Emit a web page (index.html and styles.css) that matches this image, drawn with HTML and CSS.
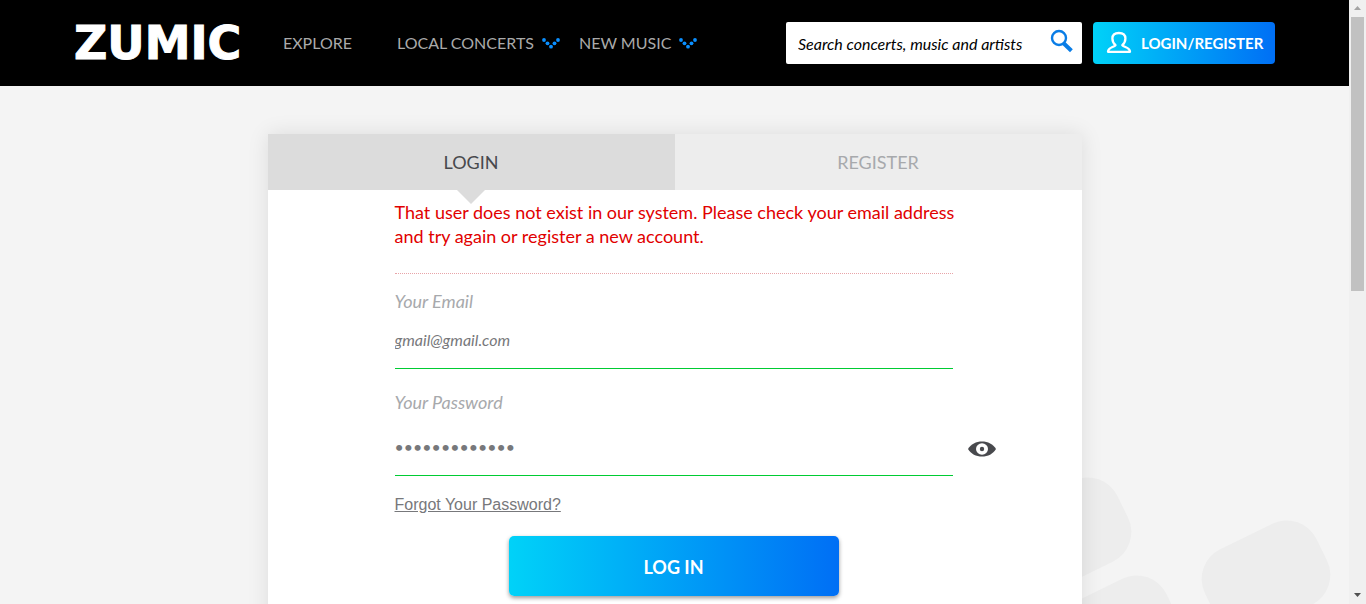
FILE: index.html
```html
<!DOCTYPE html>
<html lang="en">
<head>
<meta charset="utf-8">
<title>Zumic - Login</title>
<link rel="stylesheet" href="styles.css">
</head>
<body>
<div class="shell">
  <div class="page">
    <header class="header">
      <a class="logo" href="#">ZUMIC</a>
      <nav class="nav">
        <a class="nav-link nav-explore" href="#">EXPLORE</a>
        <a class="nav-link" href="#">LOCAL CONCERTS
          <svg class="dots" viewBox="0 0 18 11" aria-hidden="true"><circle cx="2" cy="2" r="1.9"/><circle cx="5.5" cy="5.3" r="1.9"/><circle cx="9" cy="8.7" r="1.9"/><circle cx="12.5" cy="5.3" r="1.9"/><circle cx="16" cy="2" r="1.9"/></svg>
        </a>
        <a class="nav-link" href="#">NEW MUSIC
          <svg class="dots" viewBox="0 0 18 11" aria-hidden="true"><circle cx="2" cy="2" r="1.9"/><circle cx="5.5" cy="5.3" r="1.9"/><circle cx="9" cy="8.7" r="1.9"/><circle cx="12.5" cy="5.3" r="1.9"/><circle cx="16" cy="2" r="1.9"/></svg>
        </a>
      </nav>
      <form class="search">
        <input class="search-input" type="text" aria-label="Search" placeholder="Search concerts, music and artists">
        <button class="search-button" type="button" aria-label="Search">
          <svg class="search-icon" viewBox="0 0 24 24" aria-hidden="true"><circle cx="9" cy="9" r="7" fill="none" stroke="#0a7de6" stroke-width="2.4"/><path d="M13.6 14.2L21.4 21.8" stroke="#0a7de6" stroke-width="4"/></svg>
        </button>
      </form>
      <a class="account" href="#">
        <svg class="user-icon" viewBox="0 0 26 24" aria-hidden="true"><path d="M9.5 14.2C7.4 12.4 6.4 10 6.4 7.6C6.4 4 9 2 12.9 2S19.4 4 19.4 7.6C19.4 10 18.4 12.4 16.3 14.2C18.2 16.4 23.9 16.5 24 20.8H2C2.1 16.5 7.6 16.4 9.5 14.2Z" fill="none" stroke="#fff" stroke-width="2.3" stroke-linejoin="round"/></svg>
        LOGIN/REGISTER
      </a>
    </header>
    <main class="main">
      <svg class="pattern" viewBox="1049 464 300 140" aria-hidden="true">
        <rect x="1005" y="489" width="124" height="90" rx="33" transform="rotate(-26 1067 534)"/>
        <rect x="1054" y="587" width="124" height="90" rx="33" transform="rotate(-26 1116 632)"/>
        <rect x="1204" y="532" width="124" height="90" rx="33" transform="rotate(-26 1266 577)"/>
      </svg>
      <section class="card">
        <div class="tabs">
          <button class="tab tab-active" type="button">LOGIN</button>
          <button class="tab" type="button">REGISTER</button>
        </div>
        <form class="form">
          <p class="error">That user does not exist in our system. Please check your email address<br>and try again or register a new account.</p>
          <label class="label" for="email">Your Email</label>
          <input class="field" id="email" type="email" value="gmail@gmail.com">
          <label class="label label-password" for="password">Your Password</label>
          <div class="password-row">
            <input class="field field-password" id="password" type="password" value="password12345">
            <button class="reveal" type="button" aria-label="Show password">
              <svg class="eye" viewBox="0 0 28 16" aria-hidden="true"><path d="M0 8C3 3 8 .5 14 .5S25 3 28 8C25 13 20 15.500 14 15.500S3 13 0 8Z" fill="#48494d"/><ellipse cx="14" cy="8" rx="6" ry="5.700" fill="#fff"/><circle cx="14" cy="8" r="2.200" fill="#48494d"/></svg>
            </button>
          </div>
          <a class="forgot" href="#">Forgot Your Password?</a>
          <button class="submit" type="button">LOG IN</button>
        </form>
      </section>
    </main>
  </div>
  <div class="scrollbar" aria-hidden="true">
    <svg class="arrow" viewBox="0 0 17 17"><path d="M5 10h7L8.500 6z" fill="#a3a3a3"/></svg>
    <div class="thumb"></div>
    <svg class="arrow" viewBox="0 0 17 17"><path d="M5 6h7L8.500 10z" fill="#505050"/></svg>
  </div>
</div>
</body>
</html>
```
FILE: styles.css
```css
* { box-sizing: border-box; }
body { margin: 0; font-family: Lato, sans-serif; background: #f4f4f4; }
input, button { font-family: inherit; border: 0; background: none; padding: 0; outline: 0; }
button { cursor: pointer; }

.shell { display: flex; height: 100vh; overflow: hidden; }
.page { flex: 1; display: flex; flex-direction: column; }

.header { flex: none; display: flex; align-items: center; height: 86px; padding: 0 74px; background: #000; }
.logo { width: 209px; font: bold 46px/46px "DejaVu Sans", sans-serif; -webkit-text-stroke: 1px #fff; color: #fff; text-decoration: none; }
.nav { display: flex; flex: 1; gap: 19px; }
.nav-link { display: flex; align-items: center; gap: 8px; font-size: 16px; line-height: 24px; color: #aaa; text-decoration: none; white-space: nowrap; }
.nav-explore { margin-right: 26px; }
.dots { width: 18px; height: 11px; fill: #0a8fff; }
.search { display: flex; align-items: center; width: 296px; height: 42px; margin-right: 11px; padding: 0 8px 0 12px; background: #fff; border-radius: 2px; }
.search-input { flex: 1; min-width: 0; height: 42px; padding-top: 1px; font-size: 16px; font-style: italic; color: #000; }
.search-input::placeholder { color: #000; opacity: 1; }
.search-button { display: flex; padding-bottom: 4px; }
.search-icon { width: 24px; height: 24px; }
.account { display: flex; align-items: center; gap: 9px; width: 182px; height: 42px; padding-left: 13px; border-radius: 4px; background: linear-gradient(90deg, #00d2f8, #006ff5); color: #fff; font-size: 15px; font-weight: bold; text-decoration: none; white-space: nowrap; }
.user-icon { width: 26px; height: 24px; }

.main { position: relative; flex: 1; min-height: 0; padding-top: 48px; overflow: hidden; }
.pattern { position: absolute; right: 0; bottom: 0; width: 300px; height: 140px; fill: #ededed; }
.card { position: relative; max-width: 814px; margin: 0 auto; background: #fff; box-shadow: 0 0 20px rgba(0, 0, 0, 0.1); }
.tabs { display: grid; grid-template-columns: 1fr 1fr; background: #ededed; }
.tab { position: relative; height: 56px; font-size: 18px; color: #a7a9ac; }
.tab-active { background: #dcdcdc; color: #48494d; }
.tab-active::after { content: ""; position: absolute; top: 100%; left: 50%; margin-left: -14px; border: 14px solid transparent; border-top-color: #dcdcdc; border-bottom: 0; }

.form { display: flex; flex-direction: column; align-items: flex-start; padding: 10px 129px 40px 127px; }
.error { margin: 0 0 15px; width: 100%; padding-bottom: 25px; border-bottom: 1px dotted #e8a4a8; font-size: 18px; line-height: 24px; color: #e10000; white-space: nowrap; }
.label { font-size: 18px; line-height: 24px; font-style: italic; color: #a7a9ac; }
.field { width: 100%; height: 56px; padding-bottom: 2px; border-bottom: 1px solid #0c3; font-size: 16px; font-style: italic; color: #77787b; }
.label-password { margin-top: 21px; }
.password-row { position: relative; width: 100%; }
.field-password { display: block; height: 62px; padding: 4px 0 0; }
.reveal { position: absolute; left: 100%; top: 27px; margin-left: 15px; display: flex; }
.eye { width: 28px; height: 16px; }
.forgot { margin-top: 17px; font: 16px/24px "Liberation Sans", Arial, sans-serif; color: #77787b; }
.submit { align-self: center; width: 330px; height: 60px; margin-top: 19px; padding-top: 2px; border-radius: 5px; background: linear-gradient(90deg, #00d2f8, #006ff5); box-shadow: 0 2px 4px rgba(0, 0, 0, 0.4); color: #fff; font-size: 18px; font-weight: bold; }

.scrollbar { flex: none; display: flex; flex-direction: column; width: 17px; background: #f0f0f0; }
.arrow { width: 17px; height: 17px; }
.thumb { height: 274px; margin: 0 2px auto; background: #c1c1c1; }
```
